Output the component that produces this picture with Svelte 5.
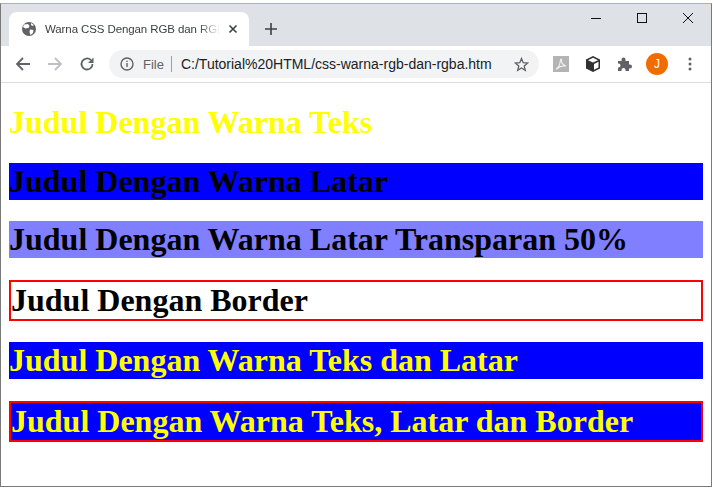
<script>
	const judul = [
		{ teks: 'Judul Dengan Warna Teks', cls: 'warna-teks' },
		{ teks: 'Judul Dengan Warna Latar', cls: 'warna-latar' },
		{ teks: 'Judul Dengan Warna Latar Transparan 50%', cls: 'latar-transparan' },
		{ teks: 'Judul Dengan Border', cls: 'border' },
		{ teks: 'Judul Dengan Warna Teks dan Latar', cls: 'teks-latar' },
		{ teks: 'Judul Dengan Warna Teks, Latar dan Border', cls: 'semua' }
	];
</script>

<div class="window">
	<div class="tabstrip">
		<div class="tab">
			<svg class="globe" width="16" height="16" viewBox="0 0 16 16">
				<circle cx="8" cy="8" r="7" fill="#5f6368" />
				<path d="M3 3.500 7 3l1.500 2-1 2-3 .5L2 6zM9 8.500l3.500.5-.5 3-2.500 2-1-3zM10 2l3 2-1.500 1L10 4z" fill="#fff" />
			</svg>
			<span class="tab-title">Warna CSS Dengan RGB dan RGBA</span>
			<svg class="tab-close" width="10" height="10" viewBox="0 0 10 10">
				<path d="M1.500 1.500l7 7M8.500 1.500l-7 7" stroke="#3c4043" stroke-width="1.600" />
			</svg>
		</div>
		<svg class="new-tab" width="14" height="14" viewBox="0 0 14 14">
			<path d="M7 1v12M1 7h12" stroke="#3c4043" stroke-width="1.600" />
		</svg>
		<div class="win-controls">
			<svg width="12" height="12" viewBox="0 0 12 12"><path d="M1 6.500h10" stroke="#111" /></svg>
			<svg width="12" height="12" viewBox="0 0 12 12"><rect x="1.500" y="1.500" width="9" height="9" fill="none" stroke="#111" /></svg>
			<svg width="12" height="12" viewBox="0 0 12 12"><path d="M1 1l10 10M11 1 1 11" stroke="#111" /></svg>
		</div>
	</div>

	<div class="toolbar">
		<svg class="nav" width="16" height="16" viewBox="0 0 16 16">
			<path d="M15 8H2M8 2 2 8l6 6" fill="none" stroke="#5f6368" stroke-width="1.800" />
		</svg>
		<svg class="nav" width="16" height="16" viewBox="0 0 16 16">
			<path d="M1 8h13M8 2l6 6-6 6" fill="none" stroke="#bdc1c6" stroke-width="1.800" />
		</svg>
		<svg class="nav" width="16" height="16" viewBox="0 0 16 16">
			<path d="M13.500 8A5.500 5.500 0 1 1 11.800 4" fill="none" stroke="#5f6368" stroke-width="1.800" />
			<path d="M14.500 1.500v5.500H9z" fill="#5f6368" />
		</svg>
		<div class="omnibox">
			<svg width="14" height="14" viewBox="0 0 14 14">
				<circle cx="7" cy="7" r="6" fill="none" stroke="#5f6368" stroke-width="1.400" />
				<path d="M7 6v4M7 3.700v1.300" stroke="#5f6368" stroke-width="1.400" />
			</svg>
			<span class="file">File</span>
			<span class="sep"></span>
			<span class="url">C:/Tutorial%20HTML/css-warna-rgb-dan-rgba.htm</span>
			<svg class="star" width="15" height="15" viewBox="0 0 15 15">
				<path d="M7.500 1.500 9.200 5.700l4.500.3-3.500 2.900 1.100 4.400-3.800-2.400-3.800 2.400 1.100-4.400L1.300 6l4.500-.3z" fill="none" stroke="#5f6368" stroke-width="1.300" />
			</svg>
		</div>
		<div class="extensions">
			<svg width="16" height="16" viewBox="0 0 16 16">
				<rect width="16" height="16" fill="#b4b4b4" />
				<path d="M3 13c2-1 4-4 4.500-9 .2-1.500 1.500-1 1 1 0 2 2 4 4.500 5-3-.5-6 0-9.500 3z" fill="none" stroke="#eee" stroke-width="1.200" />
			</svg>
			<svg width="16" height="16" viewBox="0 0 16 16">
				<path d="M8 0l7 3.500v9L8 16l-7-3.500v-9z" fill="#2f3133" />
				<path d="M8 1.800 13 4.200 8 6.600 3 4.200zM9 8l4.500-2.200v5.700L9 13.800z" fill="#fff" />
			</svg>
			<svg width="16" height="16" viewBox="0 0 16 16">
				<path d="M1 5h3.500V3.500a2 2 0 0 1 4 0V5H12v3.500h1a2 2 0 0 1 0 4h-1V15H8.500v-1a2 2 0 0 0-4 0v1H1v-3.500h.5a2 2 0 0 0 0-4H1z" fill="#5f6368" />
			</svg>
			<span class="avatar">J</span>
			<svg width="4" height="14" viewBox="0 0 4 14">
				<circle cx="2" cy="2" r="1.500" fill="#5f6368" />
				<circle cx="2" cy="7" r="1.500" fill="#5f6368" />
				<circle cx="2" cy="12" r="1.500" fill="#5f6368" />
			</svg>
		</div>
	</div>

	<div class="halaman">
		{#each judul as j}
			<h1 class={j.cls}>{j.teks}</h1>
		{/each}
	</div>
</div>

<style>
	:global(body) {
		margin: 0;
		background: #fff;
	}

	.window {
		box-sizing: border-box;
		width: 712px;
		height: 484px;
		margin-top: 3px;
		border: 1px solid #7a7a7a;
		border-top-color: #8cb8de;
		background: #fff;
		overflow: hidden;
		font-family: "Liberation Sans", Arial, sans-serif;
	}

	/* tab bar */
	.tabstrip {
		display: flex;
		align-items: flex-end;
		height: 42px;
		background: #dee1e6;
		padding-left: 8px;
	}

	.tab {
		display: flex;
		align-items: center;
		box-sizing: border-box;
		width: 240px;
		height: 34px;
		padding: 0 11px 0 12px;
		background: #fff;
		border-radius: 8px 8px 0 0;
	}

	.globe {
		flex: none;
		margin-right: 8px;
	}

	.tab-title {
		flex: 1;
		overflow: hidden;
		white-space: nowrap;
		font-size: 11.500px;
		letter-spacing: -0.1px;
		color: #3c4043;
		-webkit-mask-image: linear-gradient(to right, #000 88%, transparent);
		mask-image: linear-gradient(to right, #000 88%, transparent);
	}

	.tab-close {
		flex: none;
		margin-left: 8px;
	}

	.new-tab {
		align-self: center;
		margin: 8px 0 0 15px;
	}

	.win-controls {
		display: flex;
		align-self: flex-start;
		gap: 34px;
		margin-left: auto;
		margin-right: 17px;
		margin-top: 8px;
	}

	/* address bar */
	.toolbar {
		display: flex;
		align-items: center;
		box-sizing: border-box;
		height: 37px;
		padding-left: 14px;
		border-bottom: 1px solid #dadce0;
		background: #fff;
	}

	.nav {
		flex: none;
		margin-right: 16px;
	}

	.omnibox {
		display: flex;
		align-items: center;
		box-sizing: border-box;
		width: 430px;
		height: 28px;
		margin-left: -2px;
		padding: 0 10px 0 11px;
		background: #f1f3f4;
		border-radius: 14px;
		font-size: 13px;
	}

	.file {
		margin-left: 9px;
		font-size: 13px;
		color: #5f6368;
	}

	.sep {
		width: 1px;
		height: 16px;
		margin: 0 9px 0 7px;
		background: #9aa0a6;
	}

	.url {
		flex: 1;
		white-space: nowrap;
		overflow: hidden;
		font-size: 14px;
		color: #202124;
	}

	.extensions {
		display: flex;
		align-items: center;
		gap: 16px;
		margin-left: 14px;
	}

	.avatar {
		display: flex;
		align-items: center;
		justify-content: center;
		width: 22px;
		height: 22px;
		margin: 0 4px 0 -3px;
		border-radius: 50%;
		background: #f06c00;
		color: #fff;
		font-size: 12px;
	}

	/* halaman yang dirender */
	.halaman {
		padding: 0 8px;
		font-family: "Liberation Serif", "Times New Roman", serif;
	}

	h1 {
		margin: 21.44px 0;
		font-size: 32px;
		font-weight: bold;
		color: #000;
	}

	.warna-teks {
		color: rgb(255, 255, 0);
	}

	.warna-latar {
		background-color: rgb(0, 0, 255);
	}

	.latar-transparan {
		background-color: rgba(0, 0, 255, 0.5);
	}

	.border {
		border: 2px solid rgb(255, 0, 0);
	}

	.teks-latar {
		color: rgb(255, 255, 0);
		background-color: rgb(0, 0, 255);
	}

	.semua {
		color: rgb(255, 255, 0);
		background-color: rgb(0, 0, 255);
		border: 2px solid rgb(255, 0, 0);
	}
</style>
